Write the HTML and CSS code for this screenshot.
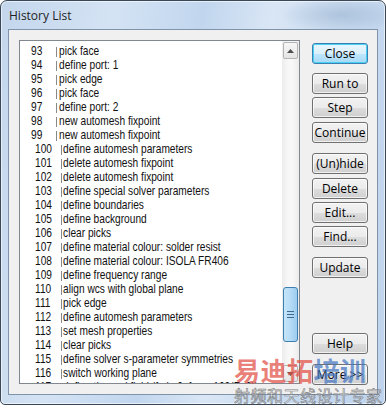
FILE: index.html
```html
<!DOCTYPE html>
<html>
<head>
<meta charset="utf-8">
<link rel="stylesheet" href="styles.css">
</head>
<body>
<div class="window">
  <div class="titlebar"><span class="title">History List</span></div>
  <div class="client">
    <div class="listbox">
      <div class="rows">
        <div class="row r2"><span class="num">93</span><span class="bar"></span>pick face</div>
        <div class="row r2"><span class="num">94</span><span class="bar"></span>define port: 1</div>
        <div class="row r2"><span class="num">95</span><span class="bar"></span>pick edge</div>
        <div class="row r2"><span class="num">96</span><span class="bar"></span>pick face</div>
        <div class="row r2"><span class="num">97</span><span class="bar"></span>define port: 2</div>
        <div class="row r2"><span class="num">98</span><span class="bar"></span>new automesh fixpoint</div>
        <div class="row r2"><span class="num">99</span><span class="bar"></span>new automesh fixpoint</div>
        <div class="row"><span class="num">100</span><span class="bar"></span>define automesh parameters</div>
        <div class="row"><span class="num">101</span><span class="bar"></span>delete automesh fixpoint</div>
        <div class="row"><span class="num">102</span><span class="bar"></span>delete automesh fixpoint</div>
        <div class="row"><span class="num">103</span><span class="bar"></span>define special solver parameters</div>
        <div class="row"><span class="num">104</span><span class="bar"></span>define boundaries</div>
        <div class="row"><span class="num">105</span><span class="bar"></span>define background</div>
        <div class="row"><span class="num">106</span><span class="bar"></span>clear picks</div>
        <div class="row"><span class="num">107</span><span class="bar"></span>define material colour: solder resist</div>
        <div class="row"><span class="num">108</span><span class="bar"></span>define material colour: ISOLA FR406</div>
        <div class="row"><span class="num">109</span><span class="bar"></span>define frequency range</div>
        <div class="row"><span class="num">110</span><span class="bar"></span>align wcs with global plane</div>
        <div class="row"><span class="num">111</span><span class="bar"></span>pick edge</div>
        <div class="row"><span class="num">112</span><span class="bar"></span>define automesh parameters</div>
        <div class="row"><span class="num">113</span><span class="bar"></span>set mesh properties</div>
        <div class="row"><span class="num">114</span><span class="bar"></span>clear picks</div>
        <div class="row"><span class="num">115</span><span class="bar"></span>define solver s-parameter symmetries</div>
        <div class="row"><span class="num">116</span><span class="bar"></span>switch working plane</div>
        <div class="row"><span class="num">117</span><span class="bar"></span>define thermal field (fmin 0, fmax 100(F=0))</div>
      </div>
      <div class="scrollbar">
        <div class="arrow up"><svg width="7" height="4" viewBox="0 0 7 4"><path d="M0 4 L3.5 0 L7 4 Z" fill="#4d4d4d"/></svg></div>
        <div class="track">
          <div class="thumb"><span class="grip"></span></div>
        </div>
        <div class="arrow down"><svg width="7" height="4" viewBox="0 0 7 4"><path d="M0 0 L3.5 4 L7 0 Z" fill="#4d4d4d"/></svg></div>
      </div>
    </div>
    <div class="buttons">
      <button class="btn default b-close">Close</button>
      <button class="btn b-run">Run to</button>
      <button class="btn b-step">Step</button>
      <button class="btn b-cont">Continue</button>
      <button class="btn b-hide">(Un)hide</button>
      <button class="btn b-del">Delete</button>
      <button class="btn b-edit">Edit...</button>
      <button class="btn b-find">Find...</button>
      <button class="btn b-upd">Update</button>
      <button class="btn b-help">Help</button>
      <button class="btn b-more">More &gt;&gt;</button>
    </div>
  </div>
</div>
<div class="watermark">
  <div class="wm1"><span class="red">易迪拓</span><span class="blue">培训</span></div>
  <div class="wm2">射频和天线设计专家</div>
</div>
</body>
</html>
```
FILE: styles.css
```css
* { box-sizing: border-box; }
html, body { margin: 0; padding: 0; background: #ffffff; }
body { position: relative; width: 386px; height: 408px; overflow: hidden; }

.window {
  width: 386px;
  height: 405px;
  border: 1px solid #3a4757;
  border-radius: 7px 7px 5px 5px;
  padding: 0 7px 9px 7px;
  display: flex;
  flex-direction: column;
  background:
    radial-gradient(ellipse 60px 18px at 340px 14px, rgba(150,175,205,0.55), rgba(150,175,205,0) 100%),
    linear-gradient(100deg, #c3d6ec 0%, #d4e3f4 25%, #c1d6ee 45%, #d9e6f5 60%, #c6d9ef 80%, #bfd3ec 100%);
  box-shadow: inset 0 0 0 1px rgba(255,255,255,0.6);
  overflow: hidden;
}

.titlebar {
  height: 28px;
  flex: none;
  display: flex;
  align-items: center;
  padding-left: 1px;
}
.title {
  font-family: "Open Sans", "Noto Sans", sans-serif;
  font-size: 12px;
  color: #1e1e1e;
  margin-top: 1px;
}

.client {
  flex: 1;
  display: flex;
  border: 1px solid #7f93ab;
  background: #f0f0f0;
  padding: 10px 9px 9px 10px;
}

.listbox {
  width: 281px;
  height: 344px;
  border: 1px solid #828790;
  background: #ffffff;
  display: flex;
  overflow: hidden;
}

/* list font emulates a narrow sans (Arial Narrow widths) */
.rows {
  flex: none;
  width: 319px;
  margin-right: -57px;
  transform: scaleX(0.82);
  transform-origin: 0 0;
  padding-top: 3px;
  font-family: "Liberation Sans", Arial, sans-serif;
  font-size: 12.4px;
  color: #111;
  overflow: hidden;
  white-space: nowrap;
}
.row {
  height: 14px;
  line-height: 14px;
  padding-left: 18.3px;
  display: flex;
  align-items: center;
}
.num { width: 31.7px; flex: none; }
.row .bar { width: 2.6px; }
.row.r2 { padding-left: 13.4px; }
.row.r2 .num { width: 30.5px; }
.row.r2 .bar { width: 3.7px; }
.bar {
  flex: none;
  height: 10px;
  border-left: 1.3px solid #6f6f6f;
  margin-top: 1px;
}

.scrollbar {
  position: relative;
  z-index: 1;
  width: 17px;
  flex: none;
  display: flex;
  flex-direction: column;
  background: linear-gradient(90deg, #ececec, #f8f8f8 40%, #f8f8f8 60%, #ececec);
}
.arrow {
  height: 17px;
  flex: none;
  display: flex;
  align-items: center;
  justify-content: center;
  border: 1px solid #b4b4b4;
  border-radius: 2px;
  background: linear-gradient(180deg, #f7f7f7, #e4e4e4);
  margin: 1px 1px 0 1px;
}
.arrow.down { margin: 0 1px 1px 1px; }
.track {
  flex: 1;
  display: flex;
  flex-direction: column;
  padding-top: 228px;
}
.thumb {
  height: 55px;
  margin: 0 1px;
  border: 1px solid #3c7fb1;
  border-radius: 3px;
  background: linear-gradient(90deg, #c5e4f8 0%, #b5dcf6 50%, #9dcbee 100%);
  display: flex;
  align-items: center;
  justify-content: center;
}
.grip {
  width: 7px;
  height: 7px;
  background: linear-gradient(180deg, #3f6a91 0 1px, transparent 1px 3px, #3f6a91 3px 4px, transparent 4px 6px, #3f6a91 6px 7px);
}

.buttons {
  flex: 1;
  display: flex;
  flex-direction: column;
  align-items: flex-end;
  padding-top: 3px;
}
.btn {
  width: 56px;
  height: 21px;
  padding: 0;
  border: 1px solid #707070;
  border-radius: 3px;
  background: linear-gradient(180deg, #f2f2f2 0%, #ebebeb 50%, #dddddd 51%, #cfcfcf 100%);
  box-shadow: inset 0 0 0 1px rgba(255,255,255,0.7);
  font-family: "Open Sans", "Noto Sans", sans-serif;
  font-size: 12px;
  color: #000;
  line-height: 17px;
  flex: none;
}
.btn.default {
  border-color: #3c7fb1;
  background: linear-gradient(180deg, #eaf6fd 0%, #d9f0fc 50%, #bee6fd 51%, #a7d9f5 100%);
  box-shadow: inset 0 0 0 1px #48d0f7;
}
.b-run { margin-top: 9px; }
.b-step { margin-top: 3px; }
.b-cont { margin-top: 4px; }
.b-hide { margin-top: 10px; }
.b-del { margin-top: 4px; }
.b-edit { margin-top: 3px; }
.b-find { margin-top: 3px; }
.b-upd { margin-top: 10px; }
.b-help { margin-top: 55px; }
.b-more { margin-top: 10px; }

.watermark {
  position: absolute;
  z-index: 5;
  left: 234px;
  top: 352px;
  font-family: "Noto Sans CJK SC", sans-serif;
  pointer-events: none;
}
.wm1 {
  font-size: 26px;
  font-weight: 700;
  line-height: 36px;
  letter-spacing: 0.5px;
}
.wm1 .red { color: rgba(225, 80, 70, 0.72); }
.wm1 .blue { color: rgba(70, 120, 195, 0.72); }
.wm2 {
  margin-top: -1px;
  font-size: 16px;
  line-height: 17px;
  color: rgba(245, 245, 245, 0.5);
  -webkit-text-stroke: 0.6px rgba(100, 100, 100, 0.8);
  letter-spacing: 0.5px;
}
```
